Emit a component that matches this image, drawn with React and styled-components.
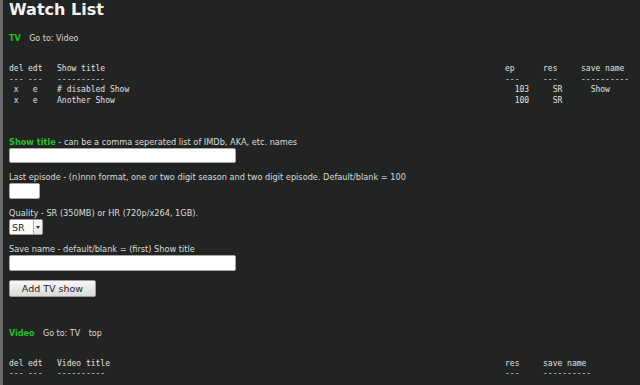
import React, { useState } from 'react'
import styled, { createGlobalStyle } from 'styled-components'

const GlobalStyle = createGlobalStyle`
  html, body {
    margin: 0;
    padding: 0;
    background: #212422;
  }
  body {
    font-family: "DejaVu Sans", Verdana, sans-serif;
    color: #dcdcdc;
  }
`

const Page = styled.div`
  min-height: 100vh;
  box-sizing: border-box;
  border-left: 3px solid #6c6c6c;
  padding: 0 9px 0 6px;
  width: 640px;
`

const Title = styled.h1`
  margin: 0;
  font-size: 16px;
  line-height: 20px;
  font-weight: bold;
  color: #f4f4f4;
`

const Nav = styled.div`
  display: flex;
  gap: 8.5px;
  font-size: 8px;
  line-height: 11px;
  margin-top: ${(p) => p.$top}px;
`

const NavHead = styled.span`
  color: #22c022;
  font-weight: bold;
`

const NavLink = styled.a`
  color: #dcdcdc;
  text-decoration: none;
`

const ListTable = styled.div`
  display: grid;
  grid-template-columns: 19px 29px 1fr 38px 38px 50px;
  font-family: "DejaVu Sans Mono", monospace;
  font-size: 8px;
  line-height: 10.5px;
  white-space: pre;
  margin-top: ${(p) => p.$top}px;
`

const Cell = styled.span`
  color: #e2e2e2;
`

const Form = styled.form`
  margin-top: 31px;
  font-size: 8.2px;
`

const Field = styled.div`
  margin-bottom: 9px;
`

const Label = styled.div`
  line-height: 11px;
`

const Hint = styled.span`
  color: #22c022;
  font-weight: bold;
`

const TextInput = styled.input`
  display: block;
  box-sizing: border-box;
  width: ${(p) => p.$w}px;
  height: ${(p) => p.$h || 16}px;
  margin: 0;
  border: 1px solid #a9a9a9;
  border-radius: 2px;
  background: #fff;
  outline: none;
  font-size: 9px;
`

const SelectBox = styled.div`
  display: flex;
  width: 34px;
  height: 16px;
  box-sizing: border-box;
  border: 1px solid #9a9a9a;
  border-radius: 2px;
  background: #fff;
  overflow: hidden;
`

const Select = styled.select`
  appearance: none;
  border: none;
  outline: none;
  background: transparent;
  width: 23px;
  padding: 0 0 0 2px;
  margin: 0;
  font-family: "DejaVu Sans", sans-serif;
  font-size: 9.5px;
  color: #222;
`

const Arrow = styled.span`
  flex: 1;
  display: flex;
  align-items: center;
  justify-content: center;
  border-left: 1px solid #b4b4b4;
  background: linear-gradient(#fafafa, #e6e6e6);
  &::after {
    content: '';
    border-left: 2.5px solid transparent;
    border-right: 2.5px solid transparent;
    border-top: 3px solid #333;
  }
`

const Button = styled.button`
  display: block;
  width: 87px;
  height: 17px;
  margin: 0;
  padding: 0;
  border: 1px solid #9c9c9c;
  border-radius: 2px;
  background: linear-gradient(#f7f7f7, #d9d9d9);
  font-family: "DejaVu Sans", sans-serif;
  font-size: 9.5px;
  color: #222;
`

const tvShows = [
  { title: '# disabled Show', ep: '103', res: 'SR', save: 'Show' },
  { title: 'Another Show', ep: '100', res: 'SR', save: '' },
]

export default function App() {
  const [title, setTitle] = useState('')
  const [episode, setEpisode] = useState('')
  const [quality, setQuality] = useState('SR')
  const [saveName, setSaveName] = useState('')

  return (
    <Page>
      <GlobalStyle />
      <Title>Watch List</Title>

      <Nav $top={13}>
        <NavHead>TV</NavHead>
        <NavLink href="#video">Go to: Video</NavLink>
      </Nav>

      <ListTable $top={20}>
        <Cell>del</Cell><Cell>edt</Cell><Cell>Show title</Cell>
        <Cell>ep</Cell><Cell>res</Cell><Cell>save name</Cell>
        <Cell>---</Cell><Cell>---</Cell><Cell>----------</Cell>
        <Cell>---</Cell><Cell>---</Cell><Cell>----------</Cell>
        {tvShows.map((s) => (
          <React.Fragment key={s.title}>
            <Cell> x</Cell><Cell> e</Cell><Cell>{s.title}</Cell>
            <Cell>  {s.ep}</Cell><Cell>  {s.res}</Cell><Cell>  {s.save}</Cell>
          </React.Fragment>
        ))}
      </ListTable>

      <Form onSubmit={(e) => e.preventDefault()}>
        <Field>
          <Label><Hint>Show title</Hint> - can be a comma seperated list of IMDb, AKA, etc. names</Label>
          <TextInput $w={227} $h={15} value={title} onChange={(e) => setTitle(e.target.value)} />
        </Field>
        <Field>
          <Label>Last episode - (n)nnn format, one or two digit season and two digit episode. Default/blank = 100</Label>
          <TextInput $w={31} value={episode} onChange={(e) => setEpisode(e.target.value)} />
        </Field>
        <Field>
          <Label>Quality - SR (350MB) or HR (720p/x264, 1GB).</Label>
          <SelectBox>
            <Select value={quality} onChange={(e) => setQuality(e.target.value)}>
              <option value="SR">SR</option>
              <option value="HR">HR</option>
            </Select>
            <Arrow />
          </SelectBox>
        </Field>
        <Field>
          <Label>Save name - default/blank = (first) Show title</Label>
          <TextInput $w={227} value={saveName} onChange={(e) => setSaveName(e.target.value)} />
        </Field>
        <Button type="submit">Add TV show</Button>
      </Form>

      <Nav $top={31} id="video">
        <NavHead>Video</NavHead>
        <NavLink href="#">Go to: TV</NavLink>
        <NavLink href="#">top</NavLink>
      </Nav>

      <ListTable $top={19.5}>
        <Cell>del</Cell><Cell>edt</Cell><Cell>Video title</Cell>
        <Cell>res</Cell><Cell>save name</Cell><Cell></Cell>
        <Cell>---</Cell><Cell>---</Cell><Cell>----------</Cell>
        <Cell>---</Cell><Cell>----------</Cell><Cell></Cell>
      </ListTable>
    </Page>
  )
}
